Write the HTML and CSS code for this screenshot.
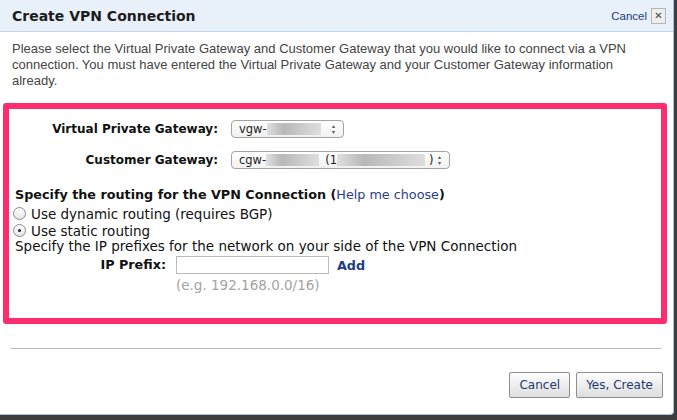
FILE: index.html
```html
<!DOCTYPE html>
<html lang="en">
<head>
  <meta charset="UTF-8">
  <title>Create VPN Connection</title>
  <link rel="stylesheet" href="styles.css">
</head>
<body>

  <div class="dialog">
    <header class="dialog-head">
      <h1>Create VPN Connection</h1>
      <div class="head-close">
        <a href="#">Cancel</a>
        <span class="close-box">&#x2715;</span>
      </div>
    </header>

    <p class="intro">Please select the Virtual Private Gateway and Customer Gateway that you would like to connect via a VPN connection. You must have entered the Virtual Private Gateway and your Customer Gateway information already.</p>

    <div class="highlight">
      <div class="field-row">
        <label class="field-label">Virtual Private Gateway:</label>
        <div class="select select-short">
          <span class="sel-text">vgw-</span>
          <span class="blur b1"></span>
          <span class="arrows">&#x25B4;<br>&#x25BE;</span>
        </div>
      </div>

      <div class="field-row">
        <label class="field-label">Customer Gateway:</label>
        <div class="select select-long">
          <span class="sel-text">cgw-</span>
          <span class="blur b2"></span>
          <span class="sel-text">(1</span>
          <span class="blur b3"></span>
          <span class="sel-text">)</span>
          <span class="arrows">&#x25B4;<br>&#x25BE;</span>
        </div>
      </div>

      <h2 class="routing-title">Specify the routing for the VPN Connection (<a href="#">Help me choose</a>)</h2>
      <label class="radio"><span class="dot"></span>Use dynamic routing (requires BGP)</label>
      <label class="radio"><span class="dot on"></span>Use static routing</label>
      <p class="prefix-note">Specify the IP prefixes for the network on your side of the VPN Connection</p>

      <div class="prefix-row">
        <span class="prefix-label">IP Prefix:</span>
        <div class="prefix-field">
          <div class="prefix-input-line">
            <input type="text" class="prefix-input">
            <a href="#" class="add-link">Add</a>
          </div>
          <div class="hint">(e.g. 192.168.0.0/16)</div>
        </div>
      </div>
    </div>

    <hr class="divider">

    <div class="actions">
      <button class="btn">Cancel</button>
      <button class="btn">Yes, Create</button>
    </div>
  </div>

</body>
</html>
```

FILE: styles.css
```css
body {
  margin: 0;
  padding: 0;
  background: #3e3e3e;
  font-family: "DejaVu Sans", Verdana, sans-serif;
}

.dialog {
  width: 673px;
  height: 414px;
  background: #fff;
  border-right: 1px solid #a8c0d8;
  border-bottom: 1px solid #a8c0d8;
  border-bottom-right-radius: 4px;
  position: relative;
}

.dialog-head {
  height: 31px;
  background: #e8f0fa;
  border-bottom: 1px solid #c2d6ec;
  display: flex;
  align-items: center;
  justify-content: space-between;
  padding: 0 7px 0 12px;
}

.dialog-head h1 {
  margin: 0;
  font-size: 14px;
  font-weight: bold;
  color: #1c1c1c;
}

.head-close {
  display: flex;
  align-items: center;
  gap: 4px;
}

.head-close a {
  font-family: "Liberation Sans", Arial, sans-serif;
  font-size: 11.5px;
  color: #223f7a;
  text-decoration: none;
}

.close-box {
  width: 13px;
  height: 14px;
  border: 1px solid #b5b5b5;
  background: #eeeeee;
  color: #444;
  font-size: 10px;
  line-height: 14px;
  text-align: center;
}

.intro {
  margin: 9px 12px 0 12px;
  font-family: "Liberation Sans", Arial, sans-serif;
  font-size: 13px;
  line-height: 16px;
  color: #444;
}

.highlight {
  margin: 14px 0 0 3px;
  width: 652px;
  height: 209px;
  border: 6px solid #ff2d6d;
  border-radius: 3px;
  padding: 0;
  font-size: 13.5px;
  color: #111;
}

.field-row {
  display: flex;
  align-items: center;
  height: 19px;
  margin-top: 10px;
}

.field-row + .field-row {
  margin-top: 12px;
}

.field-label {
  width: 222px;
  text-align: right;
  font-weight: bold;
  font-size: 12px;
  padding-right: 13px;
  box-sizing: border-box;
  flex: none;
}

.select {
  height: 16px;
  border: 1px solid #a3a3a3;
  border-radius: 4px;
  background: linear-gradient(#ffffff, #f1f1f1);
  display: flex;
  align-items: center;
  padding-left: 7px;
  font-size: 11.5px;
  color: #222;
  box-sizing: content-box;
  position: relative;
}

.select-short {
  width: 104px;
}

.select-long {
  width: 210px;
}

.blur {
  display: inline-block;
  height: 12px;
  background: linear-gradient(90deg, #e0e0e0, #b8b8b8 30%, #c8c8c8 60%, #dedede);
}

.b1 { width: 54px; }
.b2 { width: 53px; margin-right: 6px; }
.b3 { width: 88px; margin-right: 4px; }

.arrows {
  position: absolute;
  right: 8px;
  top: 2px;
  font-size: 6px;
  line-height: 6px;
  color: #555;
}

.routing-title {
  margin: 18px 0 3px 6px;
  font-size: 12.75px;
  font-weight: bold;
  color: #111;
}

.routing-title a {
  font-weight: normal;
  color: #2c3e85;
  text-decoration: none;
}

.radio {
  display: flex;
  align-items: center;
  margin-left: 4px;
  height: 17px;
  color: #111;
}

.dot {
  width: 11px;
  height: 11px;
  border: 1px solid #8a8a8a;
  border-radius: 50%;
  background: linear-gradient(#fff, #e6e6e6);
  margin-right: 5px;
  position: relative;
}

.dot.on::after {
  content: '';
  position: absolute;
  left: 4px;
  top: 4px;
  width: 3px;
  height: 3px;
  border-radius: 50%;
  background: #222;
}

.prefix-note {
  margin: 0 0 0 6px;
  line-height: 15px;
}

.prefix-row {
  display: flex;
  align-items: flex-start;
  margin-top: 2px;
}

.prefix-label {
  width: 167px;
  text-align: right;
  font-weight: bold;
  font-size: 12.75px;
  padding-right: 10px;
  box-sizing: border-box;
  line-height: 18px;
}

.prefix-input-line {
  display: flex;
  align-items: center;
}

.prefix-input {
  width: 151px;
  height: 16px;
  border: 1px solid #b9b9b9;
  padding: 0;
  margin: 0;
}

.add-link {
  margin-left: 8px;
  font-weight: bold;
  font-size: 12.75px;
  color: #1d3d86;
  text-decoration: none;
}

.hint {
  margin-top: 3px;
  color: #a3a3a3;
}

.divider {
  margin: 24px 12px 0 11px;
  border: none;
  border-top: 1px solid #b8b8b8;
}

.actions {
  display: flex;
  justify-content: flex-end;
  gap: 6px;
  margin: 23px 10px 0 0;
}

.btn {
  height: 26px;
  padding: 0 9px;
  border: 1px solid #8e8e8e;
  border-radius: 2px;
  background: linear-gradient(#fdfdfd, #dedede);
  font-family: "DejaVu Sans", Verdana, sans-serif;
  font-size: 12px;
  color: #1f3a70;
}
```
